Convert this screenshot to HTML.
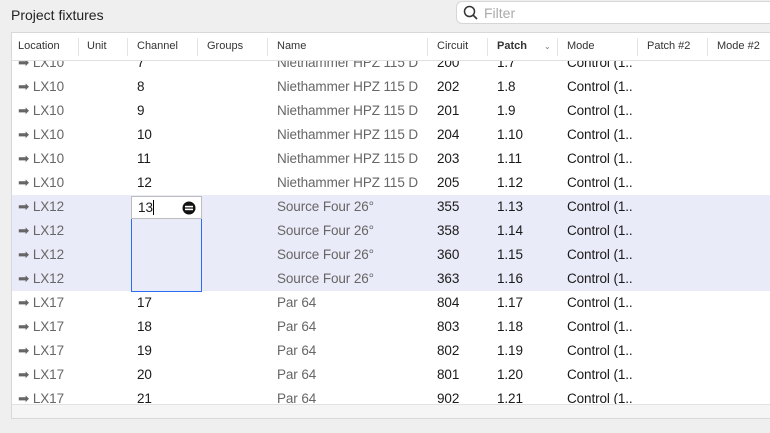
<!DOCTYPE html>
<html><head><style>
*{margin:0;padding:0;box-sizing:border-box}
body{width:770px;height:433px;background:#efefef;font-family:"Liberation Sans",sans-serif;position:relative;overflow:hidden;font-size:13px;color:#1a1a1a}
.title{position:absolute;left:11px;top:7px;font-size:14px;color:#222}
.filter{position:absolute;left:456px;top:1px;width:330px;height:23px;background:#fff;border:1px solid #d6d6d6;border-radius:6px}
.filter span{position:absolute;left:27px;top:3px;color:#aaa;font-size:14px}
.box{position:absolute;left:11px;top:32px;width:770px;height:387px;background:#fff;border:1px solid #d8d8d8;overflow:hidden}
.hdr{position:absolute;left:0;top:0;width:100%;height:28px;background:#fff;border-bottom:1px solid #e0e0e0;z-index:3}
.hdr div{position:absolute;top:7px;font-size:11px;color:#333}
.sep{position:absolute;top:5px;width:1px;height:18px;background:#e3e3e3}
.rows{position:absolute;left:0;top:18px;width:100%}
.r{position:relative;height:24px}
.r div{position:absolute;top:4px;font-size:13.5px;letter-spacing:-0.1px}
.g{color:#666}
.sel{background:#eaebf8}
.foot{position:absolute;left:0;top:371px;width:100%;height:16px;background:#f5f5f5;border-top:1px solid #e2e2e2;z-index:3}
.edit{position:absolute;left:119px;top:163px;width:71px;height:23px;background:#fff;border:1px solid #bdbdbd;z-index:2;font-size:13.5px;padding:3px 0 0 6px}
.blue{position:absolute;left:119px;top:186px;width:71px;height:73px;border:1.5px solid #2d6cf5;border-top:none;z-index:2}
</style></head><body>
<div class="title">Project fixtures</div>
<div class="filter"><svg width="16" height="16" style="position:absolute;left:6px;top:3px"><circle cx="6.5" cy="6.5" r="5" fill="none" stroke="#333" stroke-width="1.5"/><line x1="10" y1="10" x2="14" y2="14" stroke="#333" stroke-width="1.6"/></svg><span>Filter</span></div>
<div class="box">
<div class="hdr">
<div style="left:6px">Location</div><span class="sep" style="left:66px"></span>
<div style="left:75px">Unit</div><span class="sep" style="left:115px"></span>
<div style="left:125px">Channel</div><span class="sep" style="left:185px"></span>
<div style="left:195px">Groups</div><span class="sep" style="left:255px"></span>
<div style="left:265px">Name</div><span class="sep" style="left:415px"></span>
<div style="left:425px">Circuit</div><span class="sep" style="left:475px"></span>
<div style="left:485px;font-weight:bold">Patch</div><div style="left:532px;font-size:8px;top:9px;color:#777">&#8964;</div><span class="sep" style="left:545px"></span>
<div style="left:555px">Mode</div><span class="sep" style="left:625px"></span>
<div style="left:635px">Patch #2</div><span class="sep" style="left:695px"></span>
<div style="left:705px">Mode #2</div>
</div>
<div class="rows">
<div class="r"><div class="g" style="left:6px">➡ LX10</div><div style="left:125px">7</div><div class="g" style="left:265px">Niethammer HPZ 115 D</div><div style="left:425px">200</div><div style="left:485px">1.7</div><div style="left:555px">Control (1..</div></div>
<div class="r"><div class="g" style="left:6px">➡ LX10</div><div style="left:125px">8</div><div class="g" style="left:265px">Niethammer HPZ 115 D</div><div style="left:425px">202</div><div style="left:485px">1.8</div><div style="left:555px">Control (1..</div></div>
<div class="r"><div class="g" style="left:6px">➡ LX10</div><div style="left:125px">9</div><div class="g" style="left:265px">Niethammer HPZ 115 D</div><div style="left:425px">201</div><div style="left:485px">1.9</div><div style="left:555px">Control (1..</div></div>
<div class="r"><div class="g" style="left:6px">➡ LX10</div><div style="left:125px">10</div><div class="g" style="left:265px">Niethammer HPZ 115 D</div><div style="left:425px">204</div><div style="left:485px">1.10</div><div style="left:555px">Control (1..</div></div>
<div class="r"><div class="g" style="left:6px">➡ LX10</div><div style="left:125px">11</div><div class="g" style="left:265px">Niethammer HPZ 115 D</div><div style="left:425px">203</div><div style="left:485px">1.11</div><div style="left:555px">Control (1..</div></div>
<div class="r"><div class="g" style="left:6px">➡ LX10</div><div style="left:125px">12</div><div class="g" style="left:265px">Niethammer HPZ 115 D</div><div style="left:425px">205</div><div style="left:485px">1.12</div><div style="left:555px">Control (1..</div></div>
<div class="r sel"><div class="g" style="left:6px">➡ LX12</div><div class="g" style="left:265px">Source Four 26°</div><div style="left:425px">355</div><div style="left:485px">1.13</div><div style="left:555px">Control (1..</div></div>
<div class="r sel"><div class="g" style="left:6px">➡ LX12</div><div class="g" style="left:265px">Source Four 26°</div><div style="left:425px">358</div><div style="left:485px">1.14</div><div style="left:555px">Control (1..</div></div>
<div class="r sel"><div class="g" style="left:6px">➡ LX12</div><div class="g" style="left:265px">Source Four 26°</div><div style="left:425px">360</div><div style="left:485px">1.15</div><div style="left:555px">Control (1..</div></div>
<div class="r sel"><div class="g" style="left:6px">➡ LX12</div><div class="g" style="left:265px">Source Four 26°</div><div style="left:425px">363</div><div style="left:485px">1.16</div><div style="left:555px">Control (1..</div></div>
<div class="r"><div class="g" style="left:6px">➡ LX17</div><div style="left:125px">17</div><div class="g" style="left:265px">Par 64</div><div style="left:425px">804</div><div style="left:485px">1.17</div><div style="left:555px">Control (1..</div></div>
<div class="r"><div class="g" style="left:6px">➡ LX17</div><div style="left:125px">18</div><div class="g" style="left:265px">Par 64</div><div style="left:425px">803</div><div style="left:485px">1.18</div><div style="left:555px">Control (1..</div></div>
<div class="r"><div class="g" style="left:6px">➡ LX17</div><div style="left:125px">19</div><div class="g" style="left:265px">Par 64</div><div style="left:425px">802</div><div style="left:485px">1.19</div><div style="left:555px">Control (1..</div></div>
<div class="r"><div class="g" style="left:6px">➡ LX17</div><div style="left:125px">20</div><div class="g" style="left:265px">Par 64</div><div style="left:425px">801</div><div style="left:485px">1.20</div><div style="left:555px">Control (1..</div></div>
<div class="r"><div class="g" style="left:6px">➡ LX17</div><div style="left:125px">21</div><div class="g" style="left:265px">Par 64</div><div style="left:425px">902</div><div style="left:485px">1.21</div><div style="left:555px">Control (1..</div></div>
</div>
<div class="edit">13<span style="display:inline-block;width:1px;height:15px;background:#000;vertical-align:-3px"></span>
<svg width="14" height="14" style="position:absolute;right:5px;top:4px"><circle cx="7" cy="7" r="6.5" fill="#111"/><rect x="3" y="4.8" width="8" height="1.6" fill="#fff"/><rect x="3" y="7.6" width="8" height="1.6" fill="#fff"/></svg></div>
<div class="blue"></div>
<div class="foot"></div>
</div>
</body></html>
